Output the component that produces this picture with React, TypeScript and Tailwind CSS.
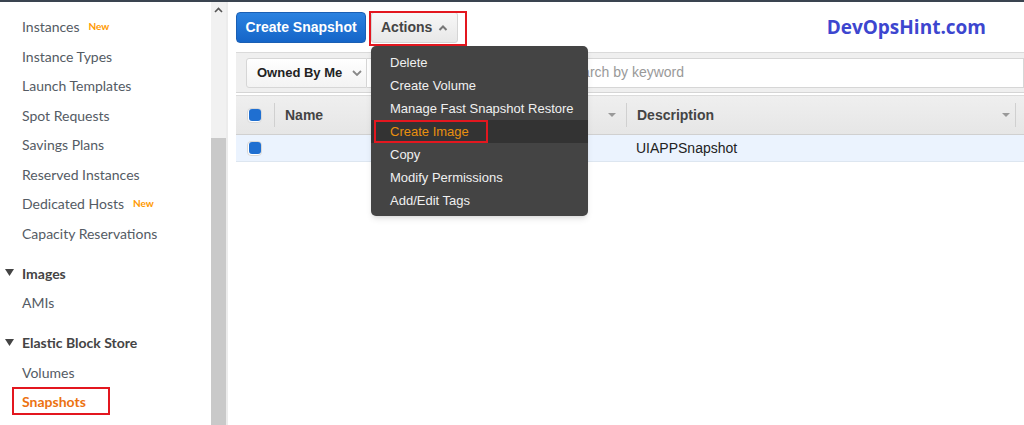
import React from "react";

const navTop = [
  { label: "Instances", badge: true },
  { label: "Instance Types" },
  { label: "Launch Templates" },
  { label: "Spot Requests" },
  { label: "Savings Plans" },
  { label: "Reserved Instances" },
  { label: "Dedicated Hosts", badge: true },
  { label: "Capacity Reservations" },
];

const menuItems = [
  "Delete",
  "Create Volume",
  "Manage Fast Snapshot Restore",
  "Create Image",
  "Copy",
  "Modify Permissions",
  "Add/Edit Tags",
];

function NavItem({ label, badge, active }: { label: string; badge?: boolean; active?: boolean }) {
  return (
    <div className="h-[29.5px] flex items-center pl-[22px]">
      <span className={active ? "text-[#ec7211] font-bold text-[14px]" : "text-[#545b64] text-[14px]"}>{label}</span>
      {badge && <span className="ml-[9px] text-[10px] font-bold text-[#ff9900]">New</span>}
    </div>
  );
}

function NavHeader({ label }: { label: string }) {
  return (
    <div className="h-[29.5px] mt-[10.5px] flex items-center pl-[5px] text-[14px] font-bold text-[#444]">
      <svg width="9" height="8" viewBox="0 0 9 8" className="mr-[8px]">
        <path d="M0 0 L9 0 L4.5 7 Z" fill="#444" />
      </svg>
      {label}
    </div>
  );
}

function Checkbox() {
  return (
    <div className="w-[15px] h-[15px] rounded-[4px] border border-[#d8d8d8] bg-white flex items-center justify-center">
      <div className="w-[12px] h-[12px] rounded-[3px] bg-[#1f6fd1]" />
    </div>
  );
}

function SortArrow() {
  return (
    <svg width="8" height="5" viewBox="0 0 8 5">
      <path d="M0 0 L8 0 L4 4 Z" fill="#999" />
    </svg>
  );
}

export default function App() {
  return (
    <div className="w-[1024px] h-[425px] overflow-hidden bg-white flex flex-col" style={{ fontFamily: '"Liberation Sans", Arial, sans-serif' }}>
      <div className="h-[2px] bg-[#3a4450] shrink-0" />
      <div className="flex flex-1 min-h-0">
        {/* Sidebar */}
        <div className="w-[211px] shrink-0 relative pt-[10px]" style={{ fontFamily: 'Lato, "Open Sans", sans-serif' }}>
          {navTop.map((n) => (
            <NavItem key={n.label} label={n.label} badge={n.badge} />
          ))}
          <NavHeader label="Images" />
          <NavItem label="AMIs" />
          <NavHeader label="Elastic Block Store" />
          <NavItem label="Volumes" />
          <div className="relative">
            <NavItem label="Snapshots" active />
            <div className="absolute left-[12px] top-[0px] w-[98px] h-[28px] border-2 border-[#e3171f]" />
          </div>
        </div>
        {/* Scrollbar */}
        <div className="w-[15px] shrink-0 flex flex-col">
          <div className="h-[136px] bg-[#f1f1f1] flex justify-center pt-[5px]">
            <svg width="9" height="6" viewBox="0 0 9 6">
              <path d="M1 5 L4.5 1.5 L8 5" stroke="#555" strokeWidth="1.6" fill="none" />
            </svg>
          </div>
          <div className="flex-1 bg-[#c9c9c9]" />
        </div>
        <div className="w-[2px] shrink-0 bg-[#ececec]" />
        {/* Main */}
        <div className="flex-1 min-w-0 pl-[8px] pt-[10px] relative">
          <div className="flex items-center h-[31px]">
            <div className="h-[31px] w-[130px] rounded-[4px] bg-gradient-to-b from-[#2b82e0] to-[#1565c8] border border-[#1a5fb4] text-white font-bold text-[14px] flex items-center justify-center whitespace-nowrap">
              Create Snapshot
            </div>
            <div className="relative ml-[5px]">
              <div className="h-[31px] w-[87px] rounded-[3px] bg-gradient-to-b from-[#f7f7f7] to-[#e8e8e8] border border-[#d5d5d5] text-[#444] font-bold text-[14px] flex items-center pl-[9px]">
                Actions
                <svg width="10" height="6" viewBox="0 0 10 6" className="ml-[6px]">
                  <path d="M1.5 5 L5 1.5 L8.5 5" stroke="#777" strokeWidth="2" fill="none" />
                </svg>
              </div>
              <div className="absolute left-[-2px] top-[-1px] w-[98px] h-[35px] border-2 border-[#e3171f]" />
              {/* Dropdown */}
              <div className="absolute left-0 top-[34px] w-[217px] h-[170px] bg-[#444444] rounded-[5px] shadow-md pt-[5px] z-10">
                {menuItems.map((m) => {
                  const hl = m === "Create Image";
                  return (
                    <div key={m} className={`h-[23px] flex items-center pl-[19px] text-[13px] whitespace-nowrap relative ${hl ? "bg-[#333333] text-[#e8900f]" : "text-[#f0f0f0]"}`}>
                      {m}
                      {hl && <div className="absolute left-[3px] top-[0px] w-[114px] h-[23px] border-2 border-[#e3171f]" />}
                    </div>
                  );
                })}
              </div>
            </div>
            <div className="ml-auto mr-[38px] text-[19px] font-bold text-[#3d46cf]" style={{ fontFamily: '"Open Sans", sans-serif' }}>
              DevOpsHint.com
            </div>
          </div>
          {/* Filter bar */}
          <div className="mt-[9px] h-[41px] bg-[#efefef] border-t border-[#dadada] border-b border-b-[#d5d5d5] flex items-center pl-[10px]">
            <div className="h-[30px] w-[121px] shrink-0 whitespace-nowrap bg-gradient-to-b from-[#ffffff] to-[#f3f3f3] border border-[#d6d6d6] rounded-l-[3px] flex items-center pl-[10px] text-[13px] font-bold text-[#222]">
              Owned By Me
              <svg width="10" height="6" viewBox="0 0 10 6" className="ml-[10px]">
                <path d="M1 1 L5 5 L9 1" stroke="#888" strokeWidth="1.8" fill="none" />
              </svg>
            </div>
            <div className="h-[30px] flex-1 bg-white border border-[#d6d6d6] border-l-0 flex items-center pl-[198px] text-[14px] text-[#999] whitespace-nowrap">
              Search by keyword
            </div>
          </div>
          {/* Table header */}
          <div className="mt-[2px] h-[40px] bg-gradient-to-b from-[#efefef] to-[#e6e6e6] border-t border-[#dcdcdc] border-b border-b-[#d0d0d0] flex items-center text-[14px] font-bold text-[#444]">
            <div className="w-[38px] pl-[11px]">
              <Checkbox />
            </div>
            <div className="w-px h-[24px] bg-[#d0d0d0]" />
            <div className="w-[351px] pl-[10px] flex items-center">
              <span>Name</span>
              <span className="ml-auto mr-[10px]"><SortArrow /></span>
            </div>
            <div className="w-px h-[24px] bg-[#d0d0d0]" />
            <div className="flex-1 pl-[10px] flex items-center">
              <span>Description</span>
              <span className="ml-auto mr-[5px]"><SortArrow /></span>
            </div>
            <div className="w-px h-[24px] bg-[#d0d0d0] mr-[8px]" />
          </div>
          {/* Row */}
          <div className="h-[27px] bg-[#ebf3fe] border-b border-[#dde6f0] flex items-center text-[14px] text-[#222]">
            <div className="w-[39px] pl-[11px]">
              <Checkbox />
            </div>
            <div className="w-[361px]" />
            <div>UIAPPSnapshot</div>
          </div>
        </div>
      </div>
    </div>
  );
}
